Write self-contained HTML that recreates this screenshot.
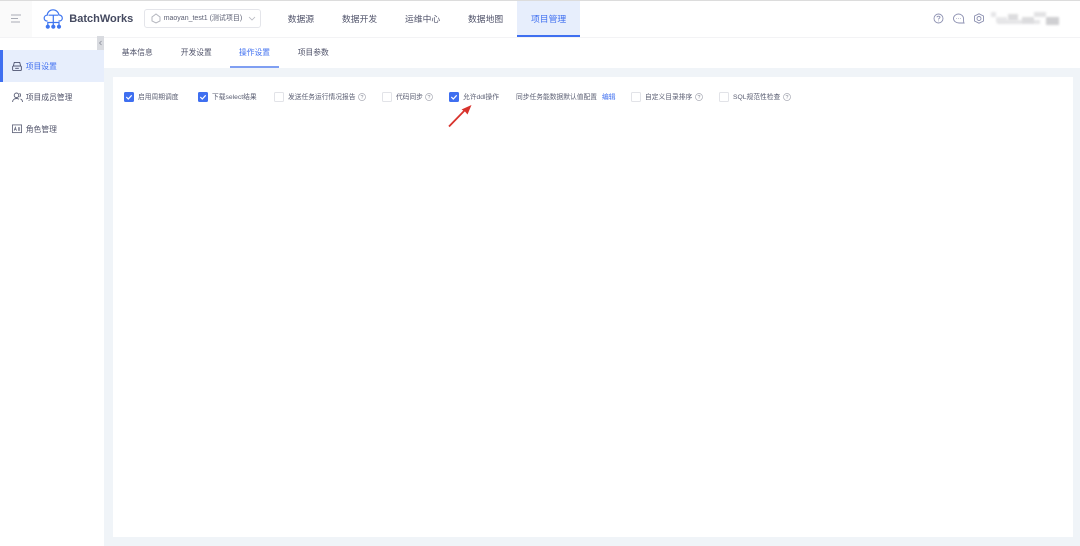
<!DOCTYPE html>
<html lang="zh-CN">
<head>
<meta charset="utf-8">
<title>BatchWorks</title>
<style>
html,body{margin:0;padding:0;width:1080px;height:546px;overflow:hidden;background:#fff}
body{font-family:"Liberation Sans","Noto Sans CJK SC",sans-serif;color:#4a4f63}
#w{position:absolute;left:0;top:0;width:1080px;height:546px;overflow:hidden;filter:blur(.35px)}
.a{position:absolute;white-space:nowrap}
.nav{top:12px;font-size:8.8px;line-height:14px;color:#50536a}
.tab{top:46.6px;font-size:7.75px;line-height:12px;color:#50536a}
.side{left:25.7px;font-size:7.8px;line-height:12px;color:#50536a}
.t{top:91.7px;font-size:6.75px;line-height:11px;color:#5a5e72}
.cb{position:absolute;top:92px;width:8px;height:8px;border:1px solid #e2e3e8;border-radius:1.5px;background:#fff}
.cb.on{width:9.5px;height:9.5px;top:92px;border:0;background:#3f6ff0;border-radius:1.5px}
.cb.on svg{position:absolute;left:0;top:0}
.q{position:absolute;top:93px}
</style>
</head>
<body>
<div id="w">
<div class="a" style="left:0;top:0;width:1080px;height:1px;background:#dcdcdc"></div>
<div class="a" style="left:0;top:1px;width:32px;height:36px;background:#fafafa"></div>
<div class="a" style="left:0;top:37px;width:1080px;height:1px;background:#f3f3f5"></div>

<svg class="a" style="left:11px;top:14px" width="10" height="9"><path d="M0 1H10M0 4.500H7M0 8H9" stroke="#a9acb5" stroke-width="1"/></svg>

<svg class="a" style="left:43px;top:9px" width="21" height="21" viewBox="0 0 21 21" fill="none" stroke="#3f76f0" stroke-width="1.200"><path d="M4.500 12H4C2.300 12 1.200 10.800 1.200 9.200C1.200 7.500 2.500 6.200 4.200 6.200C4.500 3 7 .8 10 .8C13 .8 15.500 3 15.900 6C17.800 6 19.300 7.300 19.300 9.100C19.300 10.800 18 12 16.300 12H15.500"/><path d="M5.500 6.200H15M10.300 6.200V16M4.800 16V13.500H16V16"/><circle cx="4.800" cy="17.700" r="1.500" fill="#3f76f0"/><circle cx="10.300" cy="17.700" r="1.500" fill="#3f76f0"/><circle cx="16" cy="17.700" r="1.500" fill="#3f76f0"/></svg>
<div class="a" style="left:69.300px;top:10.600px;font-size:11px;line-height:17px;font-weight:700;color:#454a60">BatchWorks</div>

<div class="a" style="left:144px;top:9px;width:115px;height:17px;border:1px solid #e4e5ea;border-radius:3px;background:#fff"></div>
<svg class="a" style="left:151px;top:13px" width="10" height="11" viewBox="0 0 10 11" fill="none" stroke="#b3b5bd" stroke-width="1"><path d="M3 2.500L5 1L7 2.500L9 4V8L5 10L1 8V4Z"/></svg>
<div class="a" style="left:163.700px;top:13.400px;font-size:7px;line-height:11px;color:#5a5e72">maoyan_test1 (测试项目)</div>
<svg class="a" style="left:248px;top:16px" width="8" height="5" fill="none" stroke="#b5b7bf" stroke-width=".8"><path d="M1 1L4 4L7 1"/></svg>

<div class="a nav" style="left:287.700px">数据源</div>
<div class="a nav" style="left:342px">数据开发</div>
<div class="a nav" style="left:405px">运维中心</div>
<div class="a nav" style="left:468px">数据地图</div>
<div class="a" style="left:517px;top:1px;width:63px;height:34px;background:#e7eefc"></div>
<div class="a" style="left:517px;top:35px;width:63px;height:2px;background:#3f6ff0"></div>
<div class="a nav" style="left:531px;color:#3f6ff0">项目管理</div>

<svg class="a" style="left:933px;top:13px" width="52" height="11" viewBox="0 0 52 11" fill="none" stroke="#8b8fb0" stroke-width=".9"><circle cx="5.500" cy="5.500" r="4.500"/><path d="M4 4.300C4 2.800 7 2.800 7 4.300C7 5.300 5.500 5.300 5.500 6.500M5.500 7.600V8.300"/><path d="M26 10C23 10 20.500 8 20.500 5.500C20.500 3 23 1 25.500 1C28 1 30.500 3 30.500 5.500C30.500 7 30.500 9 31 10Z"/><path d="M23.500 5.500H24M25.300 5.500H25.800M27 5.500H27.500"/><path d="M46 .8L50.500 3V8L46 10.200L41.500 8V3Z"/><circle cx="46" cy="5.500" r="2"/></svg>

<div class="a" style="left:991px;top:12px;width:5px;height:5px;background:#e6e6e8;filter:blur(1px)"></div>
<div class="a" style="left:996px;top:17px;width:11px;height:5px;background:#e8e8ea;filter:blur(1px)"></div>
<div class="a" style="left:1008px;top:14px;width:10px;height:7px;background:#dcdcde;filter:blur(1px)"></div>
<div class="a" style="left:997px;top:20px;width:43px;height:4px;background:#e5e5e7;filter:blur(1px)"></div>
<div class="a" style="left:1022px;top:17px;width:12px;height:6px;background:#dcdcde;filter:blur(1px)"></div>
<div class="a" style="left:1034px;top:12px;width:12px;height:5px;background:#e2e2e4;filter:blur(1px)"></div>
<div class="a" style="left:1046px;top:17px;width:13px;height:8px;background:#cfcfd2;filter:blur(1px)"></div>

<div class="a" style="left:104px;top:38px;width:976px;height:508px;background:#f0f4f8"></div>
<div class="a" style="left:104px;top:38px;width:976px;height:30px;background:#fff"></div>
<div class="a" style="left:113px;top:77px;width:960px;height:460px;background:#fff"></div>

<div class="a" style="left:97px;top:36px;width:7px;height:14px;background:#d9dbe0"></div>
<svg class="a" style="left:98px;top:40px" width="5" height="6" fill="none" stroke="#858894" stroke-width=".7"><path d="M3.500 1L1.500 3L3.500 5"/></svg>

<div class="a tab" style="left:121.700px">基本信息</div>
<div class="a tab" style="left:180.700px">开发设置</div>
<div class="a tab" style="left:239px;color:#3f6ff0">操作设置</div>
<div class="a tab" style="left:297.700px">项目参数</div>
<div class="a" style="left:230px;top:66px;width:49px;height:2px;background:#7f9ff2"></div>

<div class="a" style="left:0;top:50px;width:104px;height:32px;background:#e7eefc"></div>
<div class="a" style="left:0;top:50px;width:2.500px;height:32px;background:#3f6ff0"></div>
<svg class="a" style="left:12px;top:60.500px" width="10" height="11" viewBox="0 0 11 11" fill="none" stroke="#4e5370" stroke-width="1"><path d="M2.500 1H8.500L9.500 5H1.500Z"/><rect x=".7" y="5" width="9.600" height="5" rx="1"/><path d="M3.500 7.500H7.500"/></svg>
<div class="a side" style="top:60.600px;color:#3f6ff0">项目设置</div>
<svg class="a" style="left:12px;top:92px" width="11" height="11" viewBox="0 0 11 11" fill="none" stroke="#5b5f76" stroke-width=".9"><circle cx="4.500" cy="3.300" r="2.300"/><path d="M.6 10C.6 7.800 2.300 6.500 4.500 6.500C5.500 6.500 6.300 6.800 7 7.200"/><path d="M7.500 1.300C8.800 1.800 8.800 4.500 7.500 5"/><path d="M8.500 7C9.800 7.500 10.500 8.600 10.500 10"/></svg>
<div class="a side" style="top:91.600px">项目成员管理</div>
<svg class="a" style="left:12px;top:124px" width="10" height="10" viewBox="0 0 11 10" fill="none" stroke="#5b5f76" stroke-width=".9"><rect x=".5" y=".5" width="10" height="8.500"/><path d="M2.300 7L3.700 3L5 7M2.800 5.800H4.600M7 3V7M8.500 3V7" stroke-width=".7"/></svg>
<div class="a side" style="top:123.600px">角色管理</div>

<div class="cb on" style="left:124px"><svg width="10" height="10"><path d="M2.300 5L4.300 7L7.700 3.300" fill="none" stroke="#fff" stroke-width="1.200"/></svg></div>
<div class="a t" style="left:138px">启用周期调度</div>
<div class="cb on" style="left:198px"><svg width="10" height="10"><path d="M2.300 5L4.300 7L7.700 3.300" fill="none" stroke="#fff" stroke-width="1.200"/></svg></div>
<div class="a t" style="left:212px">下载select结果</div>
<div class="cb" style="left:274px"></div>
<div class="a t" style="left:288px">发送任务运行情况报告</div>
<svg class="q" style="left:358px" width="8" height="8" viewBox="0 0 8 8" fill="none" stroke="#a9abb5" stroke-width=".7"><circle cx="4" cy="4" r="3.500"/><path d="M3 3.100C3 2 5 2 5 3.100C5 3.800 4 3.800 4 4.700M4 5.500V6"/></svg>
<div class="cb" style="left:382px"></div>
<div class="a t" style="left:396px">代码同步</div>
<svg class="q" style="left:425px" width="8" height="8" viewBox="0 0 8 8" fill="none" stroke="#a9abb5" stroke-width=".7"><circle cx="4" cy="4" r="3.500"/><path d="M3 3.100C3 2 5 2 5 3.100C5 3.800 4 3.800 4 4.700M4 5.500V6"/></svg>
<div class="cb on" style="left:449px"><svg width="10" height="10"><path d="M2.300 5L4.300 7L7.700 3.300" fill="none" stroke="#fff" stroke-width="1.200"/></svg></div>
<div class="a t" style="left:463px">允许ddl操作</div>
<div class="a t" style="left:516px">同步任务能数据默认值配置</div>
<div class="a t" style="left:602px;color:#3f6ff0">编辑</div>
<div class="cb" style="left:631px"></div>
<div class="a t" style="left:645px">自定义目录排序</div>
<svg class="q" style="left:695px" width="8" height="8" viewBox="0 0 8 8" fill="none" stroke="#a9abb5" stroke-width=".7"><circle cx="4" cy="4" r="3.500"/><path d="M3 3.100C3 2 5 2 5 3.100C5 3.800 4 3.800 4 4.700M4 5.500V6"/></svg>
<div class="cb" style="left:719px"></div>
<div class="a t" style="left:733px">SQL规范性检查</div>
<svg class="q" style="left:783px" width="8" height="8" viewBox="0 0 8 8" fill="none" stroke="#a9abb5" stroke-width=".7"><circle cx="4" cy="4" r="3.500"/><path d="M3 3.100C3 2 5 2 5 3.100C5 3.800 4 3.800 4 4.700M4 5.500V6"/></svg>

<svg class="a" style="left:447px;top:104px" width="26" height="25" viewBox="0 0 26 25"><path d="M2 22.500L19 5" stroke="#d8322c" stroke-width="1.800" fill="none"/><path d="M24.500 1L20.500 10.500L18 7.500L14.500 5.500Z" fill="#d8322c"/></svg>
</div>
</body>
</html>
